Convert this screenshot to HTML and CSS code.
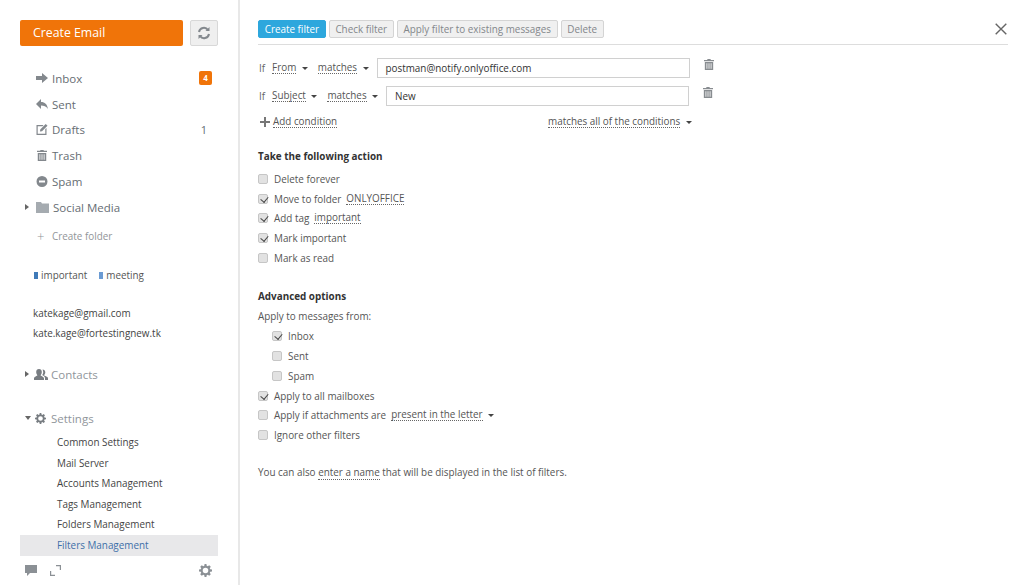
FILE: index.html
```html
<!DOCTYPE html>
<html lang="en">
<head>
<meta charset="utf-8">
<title>Filters Management</title>
<link rel="stylesheet" href="styles.css">
</head>
<body>
<svg class="defs" width="0" height="0" aria-hidden="true">
  <defs>
    <symbol id="gear" viewBox="0 0 14 14"><path fill-rule="evenodd" d="M6 0h2l.3 1.900 1.100.5L11 1.300l1.700 1.700-1.100 1.600.5 1.100L14 6v2l-1.900.3-.5 1.100 1.100 1.600-1.700 1.700-1.600-1.100-1.100.5L8 14H6l-.3-1.900-1.100-.5L3 12.700 1.300 11l1.100-1.600-.5-1.100L0 8V6l1.900-.3.5-1.100L1.300 3 3 1.300l1.600 1.100 1.100-.5zM7 4a3 3 0 1 0 0 6 3 3 0 0 0 0-6z"/></symbol>
    <symbol id="trash" viewBox="0 0 12 13"><path d="M4 0h4v1h4v1.500H0V1h4zM1 3.500h10V13H1zM3 5v6.500h1V5zm2.500 0v6.500h1V5zM8 5v6.500h1V5z" fill-rule="evenodd"/></symbol>
  </defs>
</svg>
<div class="page">
  <aside class="sidebar">
    <div class="top-actions">
      <a class="create-btn">Create Email</a>
      <a class="refresh-btn">
        <svg width="14" height="14" viewBox="0 0 14 14" fill="none" stroke="#83888d" stroke-width="2"><path d="M2 6a5 5 0 0 1 9-2M12 8a5 5 0 0 1-9 2"/><path d="M12.500 1v4h-4M1.500 13V9h4" fill="#83888d" stroke="none"/></svg>
      </a>
    </div>
    <ul class="folders">
      <li class="folder">
        <svg class="f-icon" viewBox="0 0 12 10" width="12" height="10"><path d="M0 3h6V0l6 5-6 5V7H0z"/></svg>
        <span class="f-name">Inbox</span><span class="badge">4</span>
      </li>
      <li class="folder">
        <svg class="f-icon" viewBox="0 0 12 10" width="12" height="10"><path d="M5 0v3c4 0 6 2 7 7-2-3-4-3.500-7-3.500V10L0 5z"/></svg>
        <span class="f-name">Sent</span>
      </li>
      <li class="folder">
        <svg class="f-icon" viewBox="0 0 11 11" width="11" height="11"><path d="M0 1h7L6 2.200H1.200v7.600h7.600V5L10 4v7H0z"/><path d="M9.200 0 11 1.800 5.500 7.300 3.500 7.500l.2-2z"/></svg>
        <span class="f-name">Drafts</span><span class="count">1</span>
      </li>
      <li class="folder">
        <svg class="f-icon" viewBox="0 0 12 13" width="10" height="11"><use href="#trash"/></svg>
        <span class="f-name">Trash</span>
      </li>
      <li class="folder">
        <svg class="f-icon" viewBox="0 0 11 11" width="11" height="11"><path fill-rule="evenodd" d="M5.500 0a5.500 5.500 0 1 1 0 11 5.500 5.500 0 0 1 0-11zM2.500 4.500v2h6v-2z"/></svg>
        <span class="f-name">Spam</span>
      </li>
      <li class="folder folder-user">
        <span class="arrow-right"></span>
        <svg class="f-icon-folder" viewBox="0 0 13 11" width="13" height="11"><path d="M0 0h5l1 1.500h7V11H0z"/></svg>
        <span class="f-name">Social Media</span>
      </li>
    </ul>
    <div class="create-folder"><span class="plus-light">+</span>Create folder</div>
    <div class="tags">
      <span class="tag"><i class="tag-mark tag-dark"></i>important</span>
      <span class="tag"><i class="tag-mark tag-light"></i>meeting</span>
    </div>
    <ul class="accounts">
      <li>katekage@gmail.com</li>
      <li>kate.kage@fortestingnew.tk</li>
    </ul>
    <div class="section section-contacts">
      <span class="arrow-right"></span>
      <svg class="s-icon" viewBox="0 0 14 11" width="14" height="11"><path d="M5 0c1.800 0 2.800 1.300 2.800 3S7 5.600 6.600 6.200c0 .8 3.400 1.300 3.400 3V11H0V9.200c0-1.700 3.400-2.200 3.400-3C3 5.600 2.200 4.700 2.200 3S3.200 0 5 0z"/><path d="M8.500.5c1.700 0 2.800 1.200 2.800 2.800 0 1.500-.8 2.400-1.200 3 0 .7 3.900 1.200 3.900 2.900V11h-3V9c0-1.500-2-2.300-2.800-2.900.8-1 1-2 1-3 0-.9-.3-1.900-.7-2.600z"/></svg>
      <span>Contacts</span>
    </div>
    <div class="section section-settings">
      <span class="arrow-down"></span>
      <svg class="s-icon" width="11" height="11"><use href="#gear"/></svg>
      <span>Settings</span>
    </div>
    <ul class="sub-list">
      <li>Common Settings</li>
      <li>Mail Server</li>
      <li>Accounts Management</li>
      <li>Tags Management</li>
      <li>Folders Management</li>
      <li class="current">Filters Management</li>
    </ul>
    <div class="side-footer">
      <svg viewBox="0 0 12 11" width="12" height="11"><path d="M0 0h12v8H5l-3 3V8H0z"/></svg>
      <svg class="expand" viewBox="0 0 11 11" width="11" height="11"><path d="M6 0h5v5H9.800V1.200H6zM0 6h1.200v3.800H5V11H0z"/></svg>
      <svg class="foot-gear" width="13" height="13"><use href="#gear"/></svg>
    </div>
  </aside>

  <main class="main">
    <header class="toolbar">
      <a class="btn btn-primary">Create filter</a>
      <a class="btn">Check filter</a>
      <a class="btn">Apply filter to existing messages</a>
      <a class="btn">Delete</a>
      <svg class="close" viewBox="0 0 12 12" width="12" height="12" fill="none" stroke="#666" stroke-width="1.400"><path d="M.7.700l10.600 10.600M11.300.700.700 11.300"/></svg>
    </header>

    <div class="cond">
      <span class="if">If</span>
      <span class="link">From</span><span class="caret"></span>
      <span class="link">matches</span><span class="caret"></span>
      <div class="text-input">postman@notify.onlyoffice.com</div>
      <svg class="del" width="10" height="11"><use href="#trash"/></svg>
    </div>
    <div class="cond">
      <span class="if">If</span>
      <span class="link">Subject</span><span class="caret"></span>
      <span class="link">matches</span><span class="caret"></span>
      <div class="text-input input-short">New</div>
      <svg class="del" width="10" height="11"><use href="#trash"/></svg>
    </div>
    <div class="cond-footer">
      <div class="add-cond">
        <svg viewBox="0 0 10 10" width="10" height="10"><path d="M4 0h2v4h4v2H6v4H4V6H0V4h4z"/></svg>
        <span class="link">Add condition</span>
      </div>
      <div class="match-all"><span class="link">matches all of the conditions</span><span class="caret"></span></div>
    </div>

    <h2 class="heading">Take the following action</h2>
    <div class="check-row"><i class="cb"></i><span>Delete forever</span></div>
    <div class="check-row"><i class="cb on"></i><span>Move to folder</span><span class="link">ONLYOFFICE</span></div>
    <div class="check-row"><i class="cb on"></i><span>Add tag</span><span class="link">important</span></div>
    <div class="check-row"><i class="cb on"></i><span>Mark important</span></div>
    <div class="check-row"><i class="cb"></i><span>Mark as read</span></div>

    <h2 class="heading heading-adv">Advanced options</h2>
    <div class="check-row">Apply to messages from:</div>
    <div class="check-row nested"><i class="cb on"></i><span>Inbox</span></div>
    <div class="check-row nested"><i class="cb"></i><span>Sent</span></div>
    <div class="check-row nested"><i class="cb"></i><span>Spam</span></div>
    <div class="check-row"><i class="cb on"></i><span>Apply to all mailboxes</span></div>
    <div class="check-row"><i class="cb"></i><span>Apply if attachments are</span><span class="link">present in the letter</span><span class="caret"></span></div>
    <div class="check-row"><i class="cb"></i><span>Ignore other filters</span></div>
    <p class="note">You can also <span class="link">enter a name</span> that will be displayed in the list of filters.</p>
  </main>
</div>
</body>
</html>
```
FILE: styles.css
```css
* { box-sizing: border-box; }
html, body { margin: 0; height: 100%; }
body {
  background: #fff;
  color: #333;
  font-family: "Open Sans", "Liberation Sans", sans-serif;
  font-size: 9.900px;
  overflow: hidden;
}
ul { list-style: none; margin: 0; padding: 0; }
.defs { position: absolute; }

.page { display: flex; height: 585px; }

.sidebar {
  width: 240px;
  flex: none;
  padding: 20px 20px 0;
  border-right: 2px solid #e8e8e8;
}
.top-actions { display: flex; gap: 7px; height: 26px; }
.create-btn {
  width: 163px;
  background: #f07409;
  color: #fff;
  border-radius: 2px;
  font-size: 12.300px;
  line-height: 26px;
  padding-left: 13px;
}
.refresh-btn {
  width: 28px;
  background: #efefef;
  border: 1px solid #d8d8d8;
  border-radius: 2px;
  display: flex;
  align-items: center;
  justify-content: center;
}

.folders { margin-top: 19.500px; }
.folder {
  display: flex;
  align-items: center;
  height: 25.700px;
  padding-left: 16px;
  color: #666d73;
  font-size: 11.500px;
}
.f-icon { fill: #83888d; width: 12px; margin-right: 4px; }
.f-name { flex: 1; }
.badge {
  width: 13px;
  height: 14px;
  margin-right: 6px;
  border-radius: 2px;
  background: #f07409;
  color: #fff;
  font-size: 8px;
  font-weight: 700;
  line-height: 14px;
  text-align: center;
}
.count { margin-right: 11px; font-size: 11px; }
.folder-user { padding-left: 5px; margin-top: .5px; height: 26px; }
.f-icon-folder { fill: #a5abb0; margin: 0 4px 0 7px; }
.arrow-right {
  width: 0;
  height: 0;
  border-style: solid;
  border-width: 3.500px 0 3.500px 4px;
  border-color: transparent transparent transparent #666;
}
.arrow-down {
  width: 0;
  height: 0;
  border-style: solid;
  border-width: 4px 3px 0;
  border-color: #666 transparent transparent;
}

.create-folder {
  display: flex;
  align-items: center;
  height: 20px;
  margin-top: 6px;
  padding-left: 17px;
  color: #919599;
}
.plus-light { width: 15px; font-size: 13px; font-weight: 300; line-height: 20px; }

.tags { display: flex; gap: 12px; margin-top: 19px; padding-left: 14px; height: 20px; align-items: center; color: #555; }
.tag { display: flex; align-items: center; gap: 3px; }
.tag-mark { width: 4px; height: 7px; }
.tag-dark { background: #3f7ab8; }
.tag-light { background: #6b9bd3; }

.accounts { margin-top: 18px; padding-left: 13px; color: #444; }
.accounts li { height: 20px; line-height: 20px; }

.section {
  display: flex;
  align-items: center;
  padding-left: 5px;
  color: #90969b;
  font-size: 11.500px;
  height: 20px;
}
.section-contacts { margin-top: 21px; }
.section-settings { margin-top: 24px; }
.s-icon { fill: #777c81; margin: 0 3px 0 5px; }
.section-settings .s-icon { margin: 0 5px 0 4px; }

.sub-list { margin-top: 3.500px; }
.sub-list li {
  height: 20.600px;
  line-height: 20.600px;
  padding-left: 37px;
  color: #444;
}
.sub-list .current { background: #e8e8ea; color: #3e6fa8; }

.side-footer { display: flex; align-items: center; margin-top: 7px; padding: 0 6px 0 5px; height: 16px; }
.side-footer svg { fill: #8b9095; }
.side-footer .expand { margin-left: 13px; }
.side-footer .foot-gear { margin-left: auto; }

.main { flex: 1; padding: 20px 16px 0 18px; color: #555; }
.toolbar {
  display: flex;
  align-items: flex-start;
  gap: 3px;
  height: 25px;
  border-bottom: 1px solid #ddd;
}
.btn {
  height: 18px;
  padding: 0 5.700px;
  background: #f0f0f0;
  border: 1px solid #d4d4d4;
  border-radius: 2px;
  color: #83878b;
  line-height: 16px;
}
.btn-primary { background: #2da7dd; border-color: #2da7dd; color: #fff; }
.close { margin-left: auto; margin-top: 3px; margin-right: 1px; }

.cond { display: flex; align-items: center; height: 20px; margin-top: 8px; }
.toolbar + .cond { margin-top: 13px; }
.if { margin-right: 7px; color: #666; padding-left: 1px; }
.link { border-bottom: 1px dotted #666; line-height: 11px; color: #555; }
.caret {
  width: 0;
  height: 0;
  margin: 0 10px 0 5.500px;
  border-style: solid;
  border-width: 3.500px 3.500px 0;
  border-color: #444 transparent transparent;
}
.text-input {
  flex: none;
  width: 313px;
  height: 20px;
  margin-left: -2px;
  padding-left: 8px;
  border: 1px solid #d0d0d0;
  line-height: 18px;
  color: #333;
}
.input-short { width: 303px; }
.del { fill: #888c90; margin: -8px 0 0 14px; }

.cond-footer { display: flex; align-items: center; height: 16px; margin-top: 8px; }
.add-cond { display: flex; align-items: center; gap: 3px; width: 290px; padding-left: 2px; }
.add-cond svg { fill: #777; }
.match-all { display: flex; align-items: center; }

.heading { margin: 18px 0 0; height: 16px; font-size: 9.900px; font-weight: 700; line-height: 16px; color: #333; }
.heading-adv { margin-top: 20px; }

.check-row { display: flex; align-items: center; gap: 5px; height: 19.800px; }
.heading + .check-row { margin-top: 5px; }
.heading-adv + .check-row { margin-top: 2.500px; }
.nested { padding-left: 14px; }
.cb {
  width: 10px;
  height: 10px;
  flex: none;
  position: relative;
  background: #e2e2e2;
  border: 1px solid #c6c6c6;
  border-radius: 2px;
}
.cb.on::after {
  content: "";
  position: absolute;
  left: 2.500px;
  top: 0;
  width: 3.500px;
  height: 6px;
  border: solid #444;
  border-width: 0 1.800px 1.800px 0;
  transform: rotate(40deg);
}
.check-row > .cb + span { margin-left: 1px; }
.check-row .caret { margin-left: 0; }
.note { margin: 17px 0 0; line-height: 20px; }
```
